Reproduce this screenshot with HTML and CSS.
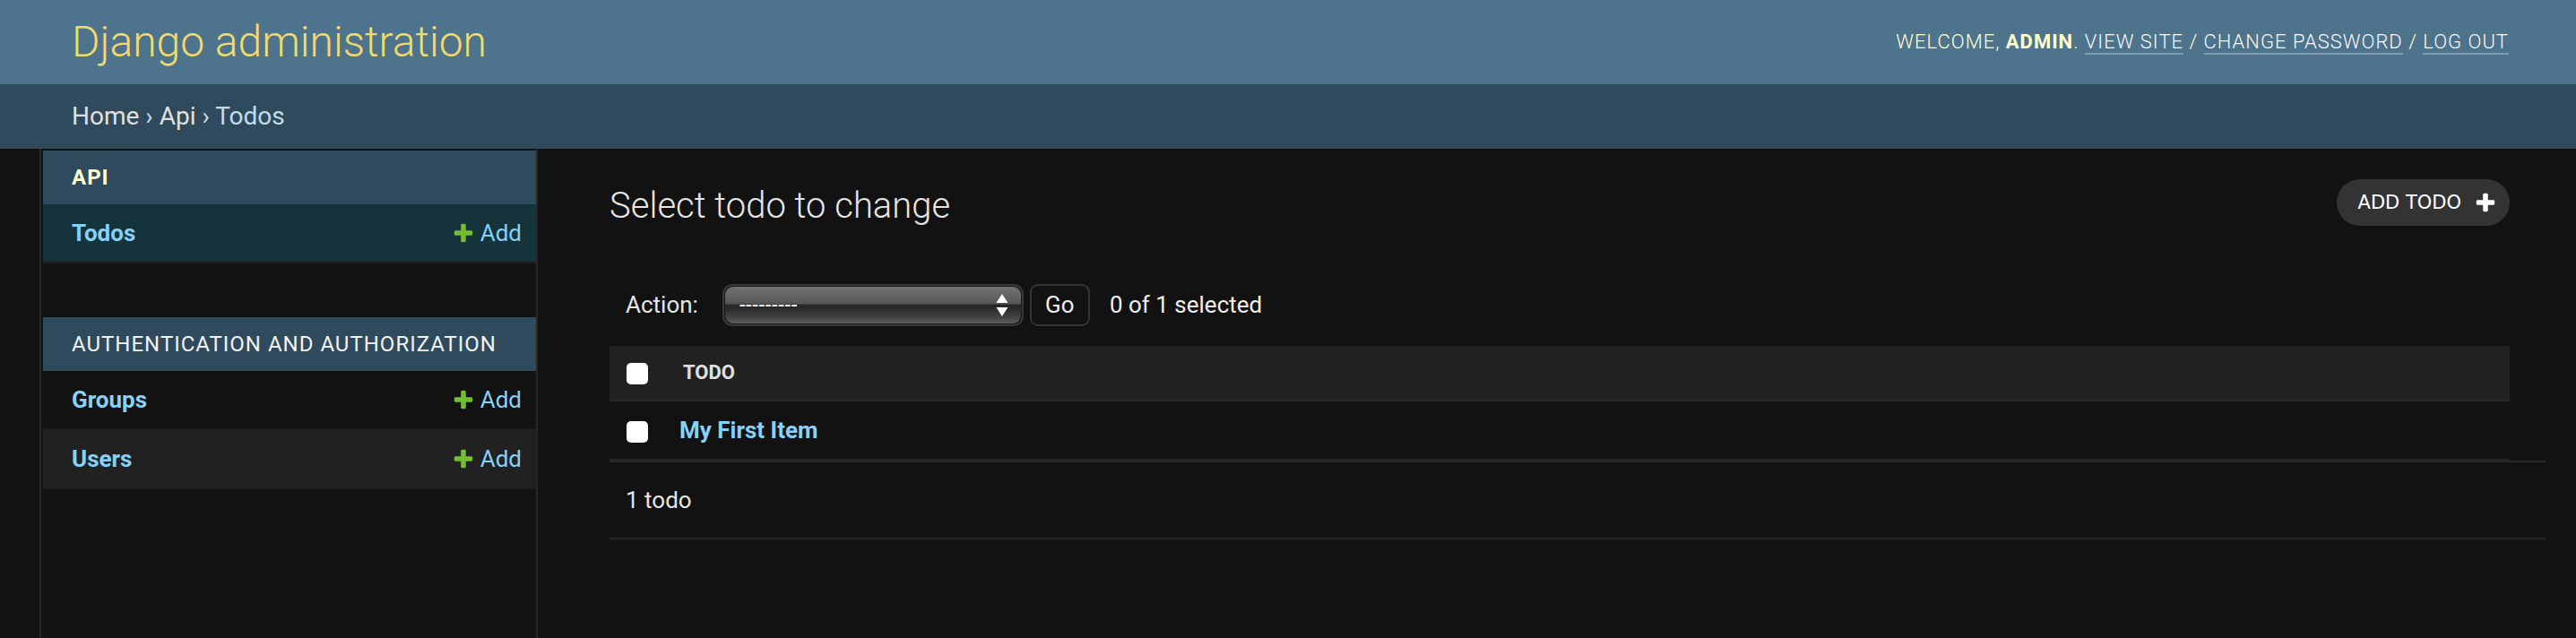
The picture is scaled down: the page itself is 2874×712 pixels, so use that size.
FILE: index.html
```html
<!DOCTYPE html>
<html lang="en">
<head>
<meta charset="utf-8">
<title>Select todo to change | Django site admin</title>
<link rel="stylesheet" href="styles.css">
</head>
<body>
<header class="header">
  <div class="branding"><h1 class="site-name"><a href="#">Django administration</a></h1></div>
  <div class="user-tools">Welcome, <strong>admin</strong>. <a href="#">View site</a> / <a href="#">Change password</a> / <a href="#">Log out</a></div>
</header>
<nav class="breadcrumbs"><a href="#">Home</a> › <a href="#">Api</a> › Todos</nav>
<div class="main">
  <button class="toggle" aria-label="Toggle navigation"></button>
  <nav class="sidebar">
    <div class="module current-app">
      <div class="caption"><a href="#">Api</a></div>
      <div class="model-row current-model">
        <a class="model-name" href="#">Todos</a>
        <a class="addlink" href="#"><svg class="plus" width="26" height="26" viewBox="0 0 1792 1792"><path fill="#74bc32" d="M1600 796v192q0 40-28 68t-68 28h-416v416q0 40-28 68t-68 28h-192q-40 0-68-28t-28-68v-416h-416q-40 0-68-28t-28-68v-192q0-40 28-68t68-28h416v-416q0-40 28-68t68-28h192q40 0 68 28t28 68v416h416q40 0 68 28t28 68z"/></svg>Add</a>
      </div>
    </div>
    <div class="module">
      <div class="caption"><a href="#">Authentication and Authorization</a></div>
      <div class="model-row">
        <a class="model-name" href="#">Groups</a>
        <a class="addlink" href="#"><svg class="plus" width="26" height="26" viewBox="0 0 1792 1792"><path fill="#74bc32" d="M1600 796v192q0 40-28 68t-68 28h-416v416q0 40-28 68t-68 28h-192q-40 0-68-28t-28-68v-416h-416q-40 0-68-28t-28-68v-192q0-40 28-68t68-28h416v-416q0-40 28-68t68-28h192q40 0 68 28t28 68v416h416q40 0 68 28t28 68z"/></svg>Add</a>
      </div>
      <div class="model-row row-alt">
        <a class="model-name" href="#">Users</a>
        <a class="addlink" href="#"><svg class="plus" width="26" height="26" viewBox="0 0 1792 1792"><path fill="#74bc32" d="M1600 796v192q0 40-28 68t-68 28h-416v416q0 40-28 68t-68 28h-192q-40 0-68-28t-28-68v-416h-416q-40 0-68-28t-28-68v-192q0-40 28-68t68-28h416v-416q0-40 28-68t68-28h192q40 0 68 28t28 68v416h416q40 0 68 28t28 68z"/></svg>Add</a>
      </div>
    </div>
  </nav>
  <main class="content">
    <div class="content-head">
      <h1 class="page-title">Select todo to change</h1>
      <a class="object-tool" href="#"><span>Add todo</span><svg width="26" height="26" viewBox="0 0 1792 1792"><path fill="#ffffff" d="M1600 796v192q0 40-28 68t-68 28h-416v416q0 40-28 68t-68 28h-192q-40 0-68-28t-28-68v-416h-416q-40 0-68-28t-28-68v-192q0-40 28-68t68-28h416v-416q0-40 28-68t68-28h192q40 0 68 28t28 68v416h416q40 0 68 28t28 68z"/></svg></a>
    </div>
    <form class="changelist">
      <div class="actions">
        <label class="action-label">Action:</label>
        <div class="select-box">
          <select class="action-select"><option>---------</option></select>
          <svg class="select-arrows" width="14" height="26" viewBox="0 0 14 26"><path fill="#ffffff" d="M7 0 L13.5 10 L0.5 10 Z M0.5 15 L13.5 15 L7 25 Z"/></svg>
        </div>
        <button class="go-button" type="button">Go</button>
        <span class="action-counter">0 of 1 selected</span>
      </div>
      <table class="results">
        <thead>
          <tr>
            <th class="check-col"><input type="checkbox" class="box"></th>
            <th class="col-head"><span>Todo</span></th>
          </tr>
        </thead>
        <tbody>
          <tr>
            <td class="check-col"><input type="checkbox" class="box"></td>
            <th class="row-link"><a href="#">My First Item</a></th>
          </tr>
        </tbody>
      </table>
      <p class="paginator">1 todo</p>
    </form>
  </main>
</div>
</body>
</html>
```
FILE: styles.css
```css
* { box-sizing: border-box; }
html, body { margin: 0; padding: 0; }
body {
  background: #121212;
  color: #eeeeee;
  font-family: Roboto, "Liberation Sans", sans-serif;
  font-size: 28px;
  min-height: 100vh;
  display: flex;
  flex-direction: column;
}
a { text-decoration: none; }

.header {
  display: flex;
  justify-content: space-between;
  align-items: center;
  height: 94px;
  padding: 20px 75px 20px 80px;
  background: #4e738c;
}
.site-name {
  margin: 0;
  font-size: 48px;
  font-weight: 300;
  line-height: 54px;
  color: #f2da6a;
}
.site-name a { color: inherit; }
.user-tools {
  font-size: 22px;
  font-weight: 300;
  letter-spacing: 1px;
  text-transform: uppercase;
  line-height: 26px;
  color: #ffffcc;
}
.user-tools strong { font-weight: 700; }
.user-tools a {
  color: #f7f7f7;
  border-bottom: 2px solid rgba(255, 255, 255, 0.28);
}

.breadcrumbs {
  background: #2f4a5c;
  padding: 20px 80px;
  font-size: 28px;
  line-height: 32px;
  color: #c4dce8;
}
.breadcrumbs a { color: #e0e0e0; }

.main {
  flex: 1;
  display: flex;
}
.toggle {
  flex: 0 0 46px;
  width: 46px;
  margin: 0 2px 0 0;
  padding: 0;
  border: 0;
  border-right: 2px solid #272727;
  background: #121212;
}
.sidebar {
  flex: 0 0 552px;
  border-top: 2px solid transparent;
  border-right: 2px solid #272727;
}
.module { margin-bottom: 60px; }
.caption {
  background: #2f4a5c;
  padding: 16px 16px 16px 32px;
  font-size: 24px;
  line-height: 28px;
  letter-spacing: 1px;
  text-transform: uppercase;
}
.caption a { color: #f2f2f2; }
.current-app .caption a { color: #ffffcc; font-weight: 700; }
.model-row {
  display: flex;
  justify-content: space-between;
  align-items: center;
  padding: 16px 16px 16px 32px;
  line-height: 32px;
  font-size: 26px;
  border-bottom: 2px solid #1e1e1e;
}
.current-model { background: #15333a; }
.row-alt { background: #212121; }
.model-name { color: #86d1f7; font-weight: 700; }
.addlink {
  display: flex;
  align-items: center;
  gap: 6px;
  color: #86d1f7;
}

.content {
  flex: 1;
  min-width: 0;
  padding: 40px 74px 0 80px;
}
.content-head {
  display: flex;
  justify-content: space-between;
  align-items: flex-start;
}
.page-title {
  margin: 0 0 40px;
  font-size: 40px;
  font-weight: 300;
  line-height: 48px;
  color: #e6e6e6;
}
.object-tool {
  display: flex;
  align-items: center;
  gap: 14px;
  height: 52px;
  margin-top: -6px;
  padding: 0 14px 0 24px;
  border-radius: 26px;
  background: #333333;
  color: #ffffff;
  font-family: "DejaVu Sans", Verdana, sans-serif;
  font-size: 21px;
  text-transform: uppercase;
}

.actions {
  display: flex;
  align-items: center;
  height: 92px;
  padding: 20px 18px;
  font-size: 26px;
  color: #e6e6e6;
}
.action-label { margin-right: 27px; }
.select-box {
  position: relative;
  width: 336px;
  height: 47px;
  border: 2px solid #383838;
  border-radius: 11px;
  padding: 1px;
  background: #1a1a1a;
}
.action-select {
  appearance: none;
  -webkit-appearance: none;
  width: 100%;
  height: 100%;
  margin: 0;
  padding: 0 0 0 16px;
  border: 0;
  border-radius: 9px;
  background: linear-gradient(to bottom, #727272 0%, #5a5a5a 42%, #4c4c4c 47%, #262626 50%, #2c2c2c 62%, #454545 85%, #5c5c5c 100%);
  color: #ffffff;
  font-family: Roboto, "Liberation Sans", sans-serif;
  font-size: 24px;
  letter-spacing: 0.6px;
}
.select-arrows {
  position: absolute;
  right: 15px;
  top: 9px;
  pointer-events: none;
}
.go-button {
  width: 67px;
  height: 47px;
  margin-left: 7px;
  padding: 0;
  border: 2px solid #353535;
  border-radius: 9px;
  background: #121212;
  color: #eeeeee;
  font-family: Roboto, "Liberation Sans", sans-serif;
  font-size: 26px;
}
.action-counter { margin-left: 22px; color: #eeeeee; }

.results {
  width: 100%;
  border-collapse: separate;
  border-spacing: 0;
}
.results thead th {
  background: #212121;
  padding: 14px 0;
  line-height: 32px;
  border-bottom: 2px solid #292929;
  text-align: left;
  font-size: 22px;
  font-weight: 700;
  text-transform: uppercase;
  color: #e0e0e0;
}
.results th.check-col,
.results td.check-col {
  width: 62px;
  text-align: center;
}
.col-head span { padding: 0 20px; }
.results tbody td,
.results tbody th {
  padding: 14px 16px;
  line-height: 36px;
  border-bottom: 2px solid #272727;
  text-align: left;
  font-size: 26px;
}
.results tbody td.check-col { padding: 14px 0; }
.row-link a { color: #86d1f7; font-weight: 700; }
.box {
  appearance: none;
  -webkit-appearance: none;
  display: inline-block;
  width: 24px;
  height: 24px;
  margin: 0;
  vertical-align: middle;
  border-radius: 5px;
  background: #ffffff;
}

.paginator {
  margin: 0 -40px 0 0;
  padding: 20px 18px;
  line-height: 44px;
  font-size: 26px;
  color: #e6e6e6;
  border-top: 2px solid #272727;
  border-bottom: 2px solid #272727;
}
```
